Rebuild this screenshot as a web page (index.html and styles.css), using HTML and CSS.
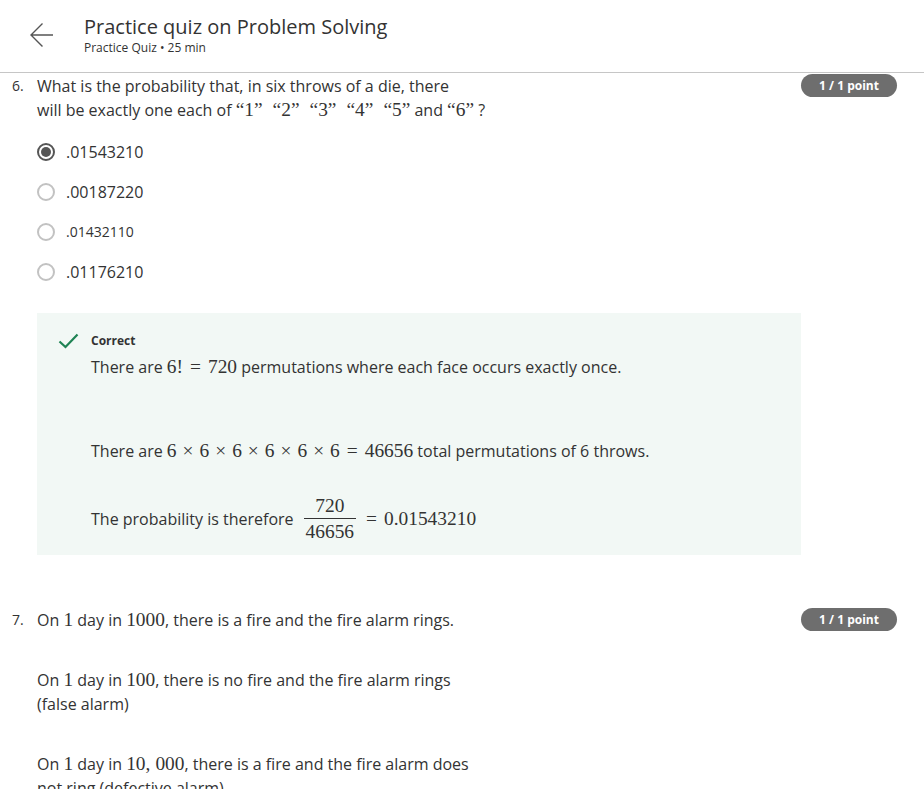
FILE: index.html
```html
<!DOCTYPE html>
<html lang="en">
<head>
<meta charset="utf-8">
<title>Practice quiz on Problem Solving</title>
<link rel="stylesheet" href="styles.css">
</head>
<body>
<header class="top">
  <svg class="back" viewBox="0 0 26 26" width="26" height="26" aria-hidden="true">
    <path d="M2 13 L24 13 M13.5 1.5 L2 13 L13.5 24.5" fill="none" stroke="#555" stroke-width="1.4"/>
  </svg>
  <div class="titles">
    <div class="title">Practice quiz on Problem Solving</div>
    <div class="sub">Practice Quiz • 25 min</div>
  </div>
</header>

<section class="question q6">
  <div class="num">6.</div>
  <div class="body">
    <p class="qtext">What is the probability that, in six throws of a die, there <span class="nw">will be exactly one each of <span class="m">“1”</span><span class="m sp">“2”</span><span class="m sp">“3”</span><span class="m sp">“4”</span><span class="m sp">“5”</span> and <span class="m">“6”</span> ?</span></p>
    <ul class="options">
      <li class="opt"><span class="radio on"></span><span>.01543210</span></li>
      <li class="opt"><span class="radio"></span><span>.00187220</span></li>
      <li class="opt small"><span class="radio"></span><span>.01432110</span></li>
      <li class="opt"><span class="radio"></span><span>.01176210</span></li>
    </ul>
    <div class="feedback">
      <svg class="check" viewBox="0 0 21 16" width="21" height="16" aria-hidden="true">
        <path d="M1.5 8.5 L7.5 14 L19.5 1.5" fill="none" stroke="#1f8354" stroke-width="2.2"/>
      </svg>
      <div class="fb-content">
        <div class="fb-label">Correct</div>
        <p class="fb-p1">There are <span class="m">6!<span class="rel">=</span>720</span> permutations where each face occurs exactly once.</p>
        <p class="fb-p2">There are <span class="m">6<span class="bin">×</span>6<span class="bin">×</span>6<span class="bin">×</span>6<span class="bin">×</span>6<span class="bin">×</span>6<span class="rel">=</span>46656</span> total permutations of 6 throws.</p>
        <p class="fb-p3"><span>The probability is therefore</span>
          <span class="frac"><span class="m numr">720</span><span class="m den">46656</span></span>
          <span class="m"><span class="rel first">=</span>0.01543210</span></p>
      </div>
    </div>
  </div>
  <div class="badge">1 / 1 point</div>
</section>

<section class="question q7">
  <div class="num">7.</div>
  <div class="body">
    <p class="qtext">On <span class="m">1</span> day in <span class="m">1000</span>, there is a fire and the fire alarm rings.</p>
    <p class="qtext gap">On <span class="m">1</span> day in <span class="m">100</span>, there is no fire and the fire alarm rings (false alarm)</p>
    <p class="qtext gap">On <span class="m">1</span> day in <span class="m">10,<span class="thin"></span>000</span>, there is a fire and the fire alarm does not ring (defective alarm)</p>
  </div>
  <div class="badge">1 / 1 point</div>
</section>
</body>
</html>
```

FILE: styles.css
```css
* { box-sizing: border-box; }
html, body { margin: 0; padding: 0; background: #fff; }
body {
  font-family: "Open Sans", "Noto Sans", sans-serif;
  color: #333;
  font-size: 16px;
  line-height: 24px;
  overflow: hidden;
  height: 789px;
}
p { margin: 0; }

.top {
  display: flex;
  align-items: center;
  gap: 29px;
  padding: 14px 0 16px 29px;
  border-bottom: 1px solid #c6c6c6;
}
.back { display: block; flex: none; }
.title { font-size: 20px; line-height: 26px; color: #333; }
.sub { font-size: 12px; line-height: 16px; color: #333; }

.question {
  display: grid;
  grid-template-columns: 37px 764px 96px;
  align-items: start;
}
.q6 { padding-top: 1px; }
.q7 { margin-top: 53px; }
.num {
  padding-left: 12px;
  font-size: 14px;
  line-height: 24px;
  color: #333;
}
.qtext { max-width: 440px; }
.nw { white-space: nowrap; }
.gap { margin-top: 36px; }

.m {
  font-family: "Liberation Serif", "DejaVu Serif", serif;
  font-size: 19.4px;
  line-height: 20px;
}
.rel { margin: 0 7px; }
.bin { margin: 0 6px; }
.thin { display: inline-block; width: 5px; }
.sp { margin-left: 10px; }

.badge {
  height: 23px;
  border-radius: 12px;
  background: #6e6e6e;
  color: #fff;
  font-size: 12px;
  font-weight: 700;
  line-height: 23px;
  text-align: center;
}

.options { list-style: none; margin: 10px 0 0; padding: 0; }
.opt {
  display: flex;
  align-items: center;
  gap: 11px;
  height: 40px;
}
.opt.small { font-size: 14px; }
.radio {
  width: 18px;
  height: 18px;
  border-radius: 50%;
  border: 2px solid #c2c2c2;
  flex: none;
  display: flex;
  align-items: center;
  justify-content: center;
}
.radio.on { border-color: #555; }
.radio.on::after {
  content: "";
  width: 10px;
  height: 10px;
  border-radius: 50%;
  background: #555;
}

.feedback {
  margin-top: 21px;
  background: #f2f8f5;
  display: flex;
  gap: 12px;
  padding: 20px 0 10px 21px;
}
.check { display: block; flex: none; }
.fb-label { font-size: 12px; font-weight: 700; line-height: 16px; color: #333; }
.fb-p1 { margin-top: 6px; }
.fb-p2 { margin-top: 60px; }
.fb-p3 {
  margin-top: 30px;
  display: flex;
  align-items: center;
  height: 52px;
  gap: 10px;
}
.fb-p3 .rel.first { margin-left: 0; }
.frac {
  display: inline-flex;
  flex-direction: column;
  align-items: center;
}
.numr { line-height: 25px; border-bottom: 1px solid #333; padding: 0 2px; width: 100%; text-align: center; }
.den { line-height: 26px; padding: 0 2px; }
```
